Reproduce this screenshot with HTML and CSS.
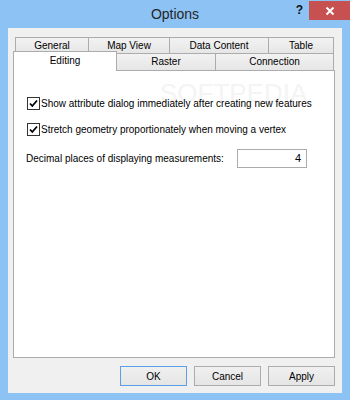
FILE: index.html
```html
<!DOCTYPE html>
<html>
<head>
  <title>Options</title>
  <link rel="stylesheet" href="styles.css">
</head>
<body>
  <div class="window">
    <div class="titlebar">
      <div class="title-spacer"></div>
      <div class="title">Options</div>
      <div class="title-controls">
        <span class="help">?</span>
        <span class="close">
          <svg width="10" height="10" viewBox="0 0 10 10">
            <path d="M1.5 1.5 L8.5 8.5 M8.5 1.5 L1.5 8.5" stroke="#fff" stroke-width="2"/>
          </svg>
        </span>
      </div>
    </div>

    <div class="client">
      <!-- back row of tabs -->
      <div class="tab-row back">
        <div class="tab w-general">General</div>
        <div class="tab w-mapview">Map View</div>
        <div class="tab w-data">Data Content</div>
        <div class="tab w-table">Table</div>
      </div>
      <!-- front row, Editing is selected -->
      <div class="tab-row front">
        <div class="tab selected w-editing">Editing</div>
        <div class="tab w-raster">Raster</div>
        <div class="tab w-connection">Connection</div>
      </div>

      <div class="panel">
        <div class="watermark">SOFTPEDIA</div>

        <label class="check-row">
          <span class="checkbox">
            <svg width="11" height="11" viewBox="0 0 11 11">
              <path d="M2 5.5 L4.3 8 L9 2.5" fill="none" stroke="#000" stroke-width="1.8"/>
            </svg>
          </span>
          Show attribute dialog immediately after creating new features
        </label>

        <label class="check-row">
          <span class="checkbox">
            <svg width="11" height="11" viewBox="0 0 11 11">
              <path d="M2 5.5 L4.3 8 L9 2.5" fill="none" stroke="#000" stroke-width="1.8"/>
            </svg>
          </span>
          Stretch geometry proportionately when moving a vertex
        </label>

        <div class="field-row">
          <span class="field-label">Decimal places of displaying measurements:</span>
          <div class="textbox">4</div>
        </div>
      </div>

      <div class="buttons">
        <button class="btn default">OK</button>
        <button class="btn">Cancel</button>
        <button class="btn">Apply</button>
      </div>
    </div>
  </div>
</body>
</html>
```

FILE: styles.css
```css
body {
  margin: 0;
  font-family: "Liberation Sans", Arial, sans-serif;
  font-size: 10px;
  color: #000;
}
.window {
  width: 350px;
  height: 400px;
  background: #8cc2f4;
  display: flex;
  flex-direction: column;
}

/* title bar */
.titlebar {
  height: 28px;
  display: flex;
}
.title-spacer,
.title-controls {
  width: 60px;
}
.title {
  flex: 1;
  text-align: center;
  font-size: 14px;
  line-height: 28px;
  color: #262626;
}
.title-controls {
  display: flex;
  align-items: flex-start;
}
.help {
  width: 19px;
  padding-top: 3px;
  text-align: center;
  font-weight: bold;
  font-size: 12px;
  color: #111;
}
.close {
  width: 41px;
  height: 19px;
  margin-top: 1px;
  background: #c75050;
  display: flex;
  align-items: center;
  justify-content: center;
}

/* client area */
.client {
  height: 365px;
  margin: 0 8px;
  box-sizing: border-box;
  padding: 9px 7px 7px 5px;
  background: #f0f0f0;
}

.tab-row {
  display: flex;
  margin-left: 2px;
}
.tab-row.back {
  height: 16px;
}
.tab-row.front {
  height: 17px;
}
.tab {
  box-sizing: border-box;
  margin-right: -1px;
  border: 1px solid #acacac;
  border-bottom: none;
  background: linear-gradient(#f2f2f2, #e6e6e6);
  text-align: center;
  line-height: 15px;
}
.front .tab {
  line-height: 16px;
}
.tab.selected {
  position: relative;
  z-index: 1;
  height: 20px;
  margin-top: -2px;
  margin-left: -2px;
  background: #fff;
  line-height: 17px;
}
.w-general { width: 74px; }
.w-mapview { width: 82px; }
.w-data { width: 100px; }
.w-table { width: 66px; }
.w-editing { width: 104px; }
.w-raster { width: 100px; }
.w-connection { width: 119px; }

.panel {
  position: relative;
  height: 288px;
  box-sizing: border-box;
  border: 1px solid #acacac;
  background: #fff;
  padding: 26px 13px 0 13px;
}
.watermark {
  position: absolute;
  left: 146px;
  top: 9px;
  font-size: 26px;
  line-height: 26px;
  color: #f4f4f4;
}

.check-row {
  position: relative;
  display: flex;
  align-items: center;
  height: 13px;
  margin-bottom: 13px;
  white-space: nowrap;
}
.checkbox {
  width: 13px;
  height: 13px;
  box-sizing: border-box;
  border: 1px solid #333;
  background: #fff;
  margin-right: 1px;
  display: flex;
  align-items: center;
  justify-content: center;
}
.field-row {
  display: flex;
  align-items: center;
  margin-left: -1px;
}
.field-label {
  width: 211px;
}
.textbox {
  width: 70px;
  height: 19px;
  box-sizing: border-box;
  border: 1px solid #ababab;
  padding-right: 5px;
  text-align: right;
  line-height: 17px;
  font-size: 11px;
}

/* dialog buttons */
.buttons {
  display: flex;
  justify-content: flex-end;
  gap: 7px;
  margin-top: 8px;
}
.btn {
  width: 67px;
  height: 20px;
  padding: 0;
  border: 1px solid #acacac;
  background: linear-gradient(#f0f0f0, #e5e5e5);
  font-family: "Liberation Sans", Arial, sans-serif;
  font-size: 10px;
  color: #000;
}
.btn.default {
  border-color: #5b9fe6;
}
```
